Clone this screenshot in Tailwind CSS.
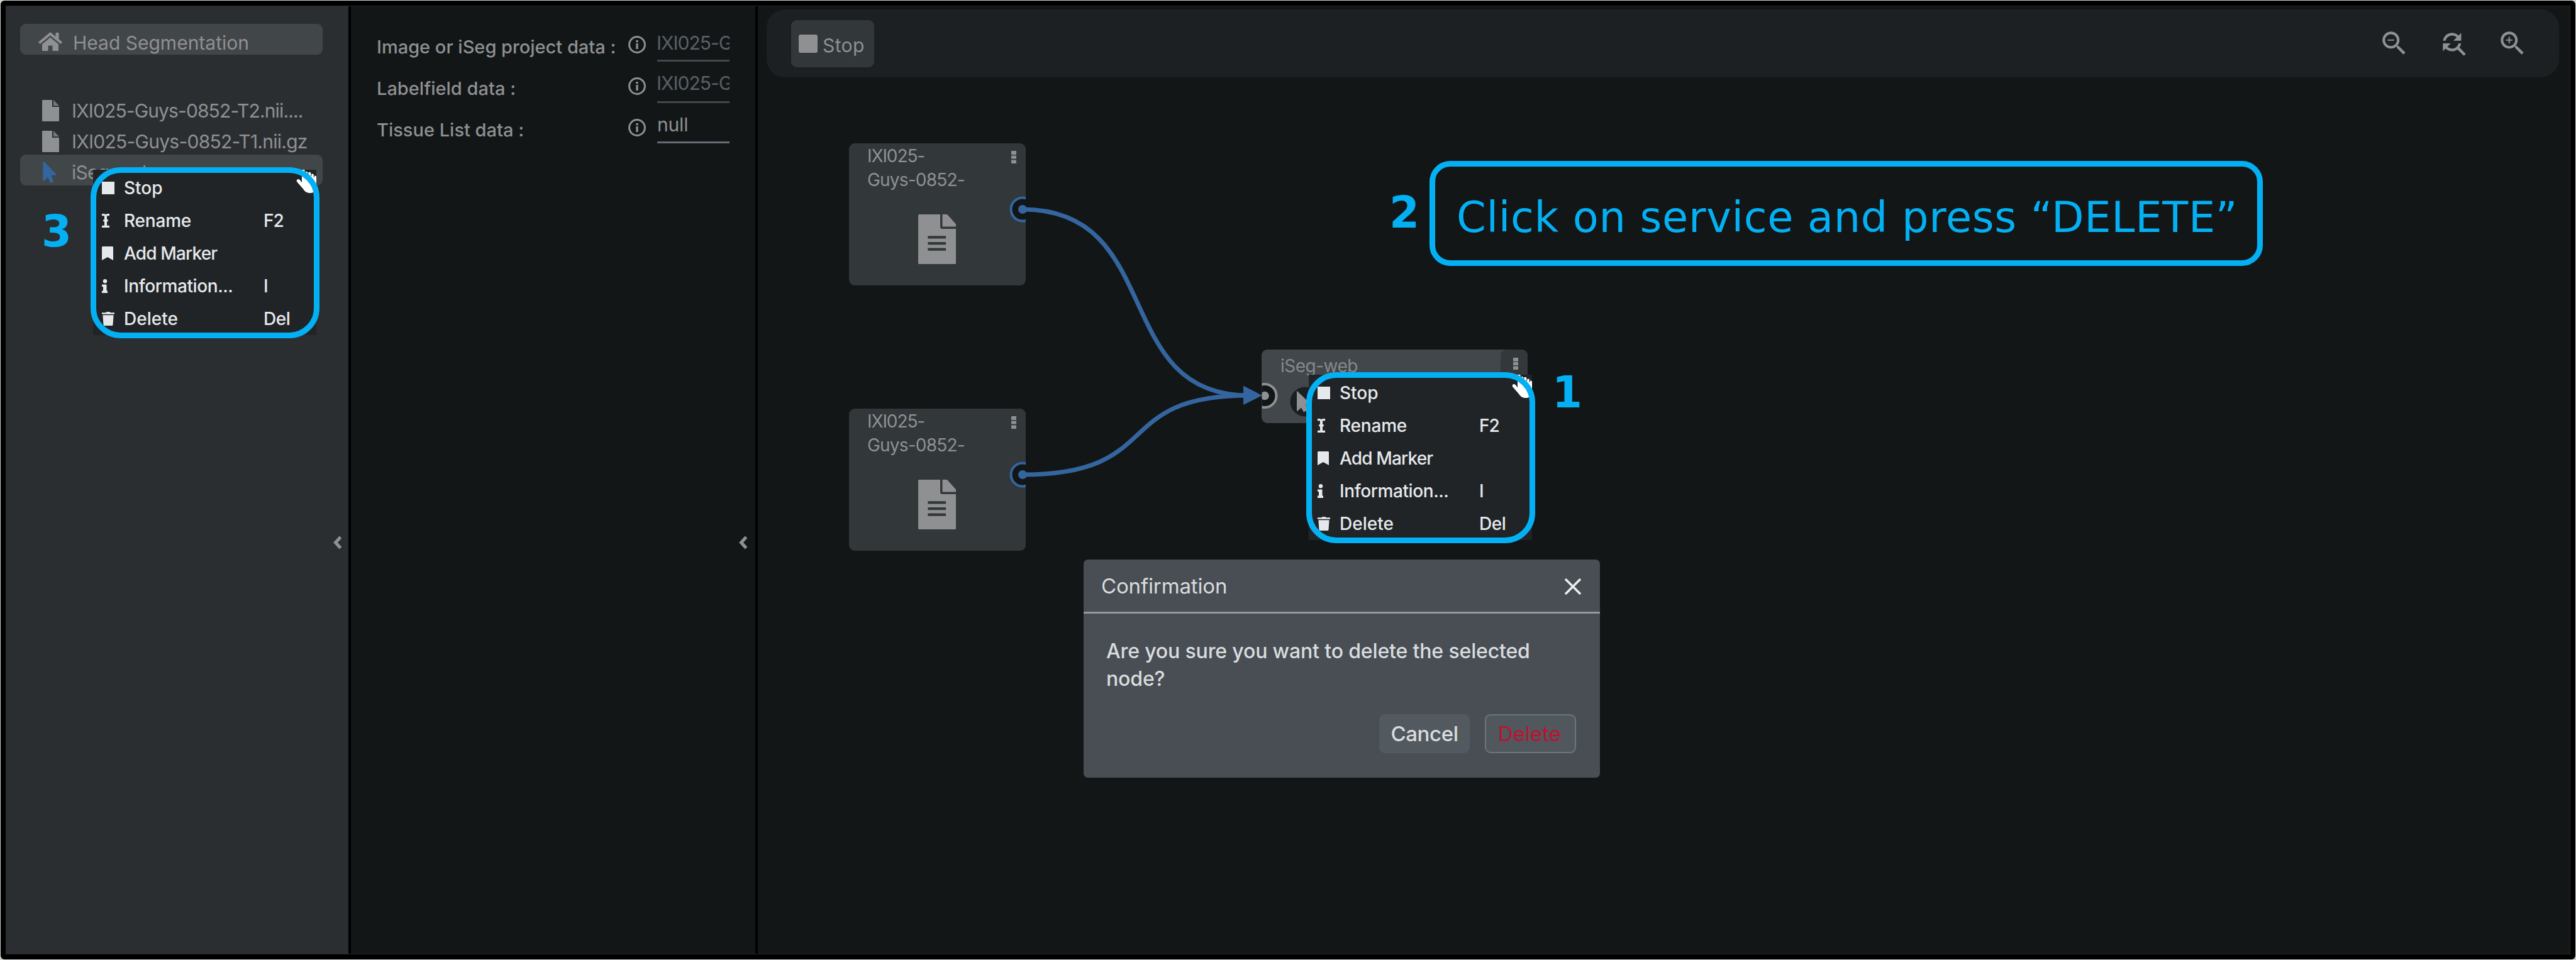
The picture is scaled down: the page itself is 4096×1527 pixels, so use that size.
<!DOCTYPE html>
<html lang="en">
<head>
<meta charset="utf-8">
<title>Head Segmentation</title>
<script src="https://cdn.jsdelivr.net/npm/@tailwindcss/browser@4"></script>
</head>
<body class="h-[1527px] w-[4096px] overflow-hidden bg-[#cdd3d0] p-px font-['Inter',sans-serif] text-[30px] leading-none text-[#8f9092]">
<svg class="hidden">
  <symbol id="home" viewBox="0 0 38 30"><path d="M19 0 0 16l2.500 3L19 5.500 35.500 19 38 16l-5.500-4.800V1h-5v6.200z"/><path d="M19 8.500 6 19.200V30h9.500v-8.500h7V30H32V19.200z"/></symbol>
  <symbol id="file" viewBox="0 0 27 34"><path d="M0 1a1 1 0 0 1 1-1h15v11h11v22a1 1 0 0 1-1 1H1a1 1 0 0 1-1-1z"/><path d="M18 0v9.300h9z" opacity=".75"/></symbol>
  <symbol id="doc" viewBox="0 0 60 79"><path fill-rule="evenodd" d="M1.500 0H35v19.500q0 3.500 3.500 3.500H60v54.500q0 1.500-1.500 1.500h-57Q0 79 0 77.500v-76Q0 0 1.500 0zM15.400 34.200v4.300H44v-4.300zm0 9.700v4.300H44v-4.300zm0 9.600v4.300H44v-4.300z"/><path d="M38.500 0H46l14 15.500v4H38.500z"/></symbol>
  <symbol id="pointer" viewBox="0 0 320 512"><path d="M302.189 329.126H196.105l55.831 135.993c3.889 9.428-.555 19.999-9.444 23.999l-49.165 21.427c-9.165 4-19.443-.571-23.332-9.714l-53.053-129.136-86.664 89.138C18.729 472.71 0 463.554 0 447.977V18.299C0 1.899 19.921-6.096 30.277 5.443l284.412 292.542c11.472 11.179 3.007 31.141-12.500 31.141z"/></symbol>
  <symbol id="info-o" viewBox="0 0 28 28"><circle cx="14" cy="14" r="12.400" fill="none" stroke="currentColor" stroke-width="3"/><path d="M12.300 7h3.400v3.200h-3.400zM12.300 12h3.400v9h-3.400z"/></symbol>
  <symbol id="ibeam" viewBox="0 0 12 22"><path d="M0 0h4.200L6 1.500 7.800 0H12v3.200H8v6h1.800v3H8v6.600h4V22H0v-3.200h4v-6.600H2.200v-3H4v-6H0z"/></symbol>
  <symbol id="bookmark" viewBox="0 0 18 22"><path d="M1 0h16l1 1v21l-9-5-9 5V1z"/></symbol>
  <symbol id="info" viewBox="0 0 9 22"><circle cx="5" cy="3.300" r="3.200"/><path d="M0 8.500h7.500v10H9V22H0v-3.500h2v-6.500H0z"/></symbol>
  <symbol id="trash" viewBox="0 0 20 22"><path d="M6.500 1.200 7.500 0h5l1 1.200H20v2.600H0V1.200z"/><path d="M1.400 5.200h17.200L17.500 20.500q-.1 1.500-1.600 1.500H4.100q-1.500 0-1.600-1.500z"/></symbol>
  <symbol id="chev" viewBox="0 0 15 22"><path d="M12.500 2.200 4.500 11l8 8.800" fill="none" stroke="currentColor" stroke-width="5"/></symbol>
  <symbol id="hand" viewBox="0 0 32 38"><path d="M6 0h7l.5 16" fill="none" stroke="#15172a" stroke-width="1"/><path d="M9 0h4.500v13l.8-3V4q2-2 4 0v5h1V4.500q2-1.500 4 .5v5h1V7q2-1 3.500.5V12h1V9.500q1.500-.5 3.200 1V31q-3.500 6-10 6-7 .5-11-6.500L1 19q-1.200-3.500 2-4 2-.2 3.500 2L9 20.500z" fill="#fff"/></symbol>
</svg>

<div class="h-full rounded-[6px] bg-black p-2">
  <div class="flex h-full border-y border-r border-[#262727] bg-black">

    <!-- project tree -->
    <aside class="flex w-[545px] bg-[#2b2e31]">
      <div class="w-[504px] pt-7 pl-[23px]">
        <div class="flex h-[49px] items-center rounded-[9px] bg-[#414649] pt-[10px] pl-[29px]">
          <svg class="mr-[17px] -mt-[3px] h-[30px] w-[38px] fill-current"><use href="#home"/></svg>
          <span class="whitespace-nowrap">Head Segmentation</span>
        </div>
        <div class="mt-[61px] flex h-[49px] items-center pt-[6px] pl-[35px]">
          <svg class="mr-[20px] h-[34px] w-[27px] fill-current"><use href="#file"/></svg>
          <span class="tracking-[-0.88px] whitespace-nowrap">IXI025-Guys-0852-T2.nii....</span>
        </div>
        <div class="flex h-[49px] items-center pt-[6px] pl-[35px]">
          <svg class="mr-[20px] h-[34px] w-[27px] fill-current"><use href="#file"/></svg>
          <span class="tracking-[-0.75px] whitespace-nowrap">IXI025-Guys-0852-T1.nii.gz</span>
        </div>
        <div class="flex h-[49px] items-center rounded-[9px] bg-[#414649] pt-[6px] pl-[36px]">
          <svg class="mr-[24px] h-[34px] w-[22px] fill-[#34659e]"><use href="#pointer"/></svg>
          <span class="tracking-[-0.8px] whitespace-nowrap">iSeg-web</span>
        </div>
      </div>
      <div class="pt-[842px] pl-4"><svg class="h-[22px] w-[15px]"><use href="#chev"/></svg></div>
    </aside>

    <!-- node settings -->
    <section class="ml-1 flex w-[643px] bg-[#121617]">
      <div class="grid w-[602px] auto-rows-[66px] grid-cols-[400px_46px_115px] pt-[31px] pl-[41px]">
        <div class="flex h-[66px] items-center"><span class="whitespace-nowrap text-[29px] font-medium">Image or iSeg project data :</span></div>
        <svg class="mt-[16px] h-7 w-7 fill-current"><use href="#info-o"/></svg>
        <div class="flex h-[57px] items-center overflow-hidden border-b-[3px] border-[#43484d] text-[#596066]"><span class="-ml-px tracking-[-1px] whitespace-nowrap">IXI025-Guys</span></div>
        <div class="flex h-[66px] items-center"><span class="whitespace-nowrap text-[29px] font-medium">Labelfield data :</span></div>
        <svg class="mt-[16px] h-7 w-7 fill-current"><use href="#info-o"/></svg>
        <div class="flex h-[57px] items-center overflow-hidden border-b-[3px] border-[#43484d] pb-[4px] text-[#596066]"><span class="-ml-px tracking-[-1px] whitespace-nowrap">IXI025-Guys</span></div>
        <div class="flex h-[66px] items-center"><span class="whitespace-nowrap text-[29px] font-medium">Tissue List data :</span></div>
        <svg class="mt-[16px] h-7 w-7 fill-current"><use href="#info-o"/></svg>
        <div class="flex h-[55px] items-center overflow-hidden border-b-[3px] border-[#686a74] pb-[2px]"><span class="tracking-[-0.2px] whitespace-nowrap">null</span></div>
      </div>
      <div class="pt-[842px] pl-[14px]"><svg class="h-[22px] w-[15px]"><use href="#chev"/></svg></div>
    </section>

    <!-- workbench -->
    <main class="ml-1 flex-1 bg-[#121617] pt-[5px] pr-[17px] pl-[14px]">
      <div class="flex h-[108px] items-center rounded-[29px] bg-[#1c2022] pr-[49px] pl-[39px]">
        <div class="flex h-[75px] w-[132px] items-center rounded-[9px] bg-[#32373a] pl-[12px]">
          <div class="mr-[8px] h-[29px] w-[30px] rounded-[3px] bg-[#8f9092]"></div>
          <span class="pt-[6px] tracking-[0.4px]">Stop</span>
        </div>
        <div class="ml-auto flex gap-[44px] fill-current">
          <svg class="size-[50px]" viewBox="0 0 24 24"><path d="M15.500 14h-.79l-.28-.27C15.410 12.590 16 11.110 16 9.500 16 5.910 13.090 3 9.500 3S3 5.910 3 9.500 5.910 16 9.500 16c1.610 0 3.090-.59 4.230-1.570l.27.28v.79l5 4.990L20.490 19l-4.990-5zm-6 0C7.010 14 5 11.990 5 9.500S7.010 5 9.500 5 14 7.010 14 9.500 11.990 14 9.500 14zM7 9h5v1H7z"/></svg>
          <svg class="size-[50px]" viewBox="0 0 24 24"><path d="M11 6c1.380 0 2.630.56 3.540 1.460L12 10h6V4l-2.050 2.050C14.680 4.780 12.930 4 11 4c-3.530 0-6.430 2.610-6.920 6H6.100c.46-2.280 2.480-4 4.900-4zm5.640 9.140c.66-.9 1.120-1.970 1.280-3.140H15.900c-.46 2.280-2.480 4-4.900 4-1.380 0-2.630-.56-3.540-1.460L10 12H4v6l2.050-2.050C7.320 17.220 9.070 18 11 18c1.550 0 2.980-.51 4.140-1.360L20 21.490 21.490 20l-4.850-4.860z"/></svg>
          <svg class="size-[50px]" viewBox="0 0 24 24"><path d="M15.500 14h-.79l-.28-.27C15.410 12.590 16 11.110 16 9.500 16 5.910 13.090 3 9.500 3S3 5.910 3 9.500 5.910 16 9.500 16c1.610 0 3.090-.59 4.230-1.570l.27.28v.79l5 4.990L20.490 19l-4.990-5zm-6 0C7.010 14 5 11.990 5 9.500S7.010 5 9.500 5 14 7.010 14 9.500 11.990 14 9.500 14zm2.500-4h-2v2H9v-2H7V9h2V7h1v2h2v1z"/></svg>
        </div>
      </div>
    </main>
  </div>
</div>

<!-- data nodes -->
<div class="absolute top-[228px] left-[1350px] h-[226px] w-[281px] rounded-[9px] bg-[#32373a] pt-[1px] pl-[29px]">
  <div class="text-[28px] leading-[38px]"><div class="tracking-[-1.1px]">IXI025-</div><div class="tracking-[-0.8px]">Guys-0852-</div></div>
  <svg class="mt-[36px] ml-[81px] h-[79px] w-[60px] fill-current"><use href="#doc"/></svg>
</div>
<div class="absolute top-[650px] left-[1350px] h-[226px] w-[281px] rounded-[9px] bg-[#32373a] pt-[1px] pl-[29px]">
  <div class="text-[28px] leading-[38px]"><div class="tracking-[-1.1px]">IXI025-</div><div class="tracking-[-0.8px]">Guys-0852-</div></div>
  <svg class="mt-[36px] ml-[81px] h-[79px] w-[60px] fill-current"><use href="#doc"/></svg>
</div>

<!-- service node -->
<div class="absolute top-[556px] left-[2006px] flex h-[117px] w-[423px] items-start overflow-hidden rounded-[9px] bg-[#42474b] pl-[30px] text-[#85888a]">
  <span class="pt-[12px] text-[28px] tracking-[-0.5px]">iSeg-web</span>
  <div class="ml-auto h-[60px] w-[43px] rounded-tl-[9px] bg-[#33383b]"></div>
</div>

<!-- wires, ports and node handles -->
<svg class="absolute top-0 left-0 h-[1527px] w-[4096px]" fill="none">
  <defs>
    <clipPath id="c1"><path d="M1590 300h41v500h-41z"/></clipPath>
    <clipPath id="c2"><path d="M2006.500 590h40v80h-40z"/></clipPath>
  </defs>
  <g clip-path="url(#c1)" stroke="#34659e" stroke-width="4">
    <g fill="#121617"><circle cx="1626" cy="333" r="18.500"/><circle cx="1626" cy="755" r="18.500"/></g>
  </g>
  <g clip-path="url(#c2)"><circle cx="2011" cy="629.500" r="18.500" fill="#121617" stroke="#8f9092" stroke-width="4"/><circle cx="2011" cy="629.500" r="6.800" fill="#8f9092"/></g>
  <g stroke="#34659e" stroke-width="7">
    <path d="M1626 333C1853 333 1765.500 629 1985 629"/>
    <path d="M1626 755C1853 755 1765.500 629 1985 629"/>
  </g>
  <g fill="#34659e"><circle cx="1626" cy="333" r="7"/><circle cx="1626" cy="755" r="7"/><path d="M1977 613.500 2007 629l-30 15z"/></g>
  <circle cx="2075" cy="639" r="23.500" fill="#1b1f21"/>
  <g fill="#8f9092">
    <path d="M2062 621.500v33l7-6 4 7 6-3-3-9h9z"/>
    <path d="M1608 240h8v6h-8zm0 7.500h8v5h-8zm0 7h8v5.500h-8zM1608 662h8v6h-8zm0 7.500h8v5h-8zm0 7h8v5.500h-8zM2406 569h8v6h-8zm0 7h8v5h-8zm0 6.500h8v5.500h-8z"/>
  </g>
</svg>

<!-- context menu: project tree -->
<div class="absolute top-[270px] left-[148px] h-[263px] w-[355px] bg-[#212427] pt-[3px] text-[28px] font-medium text-[#e6e9ec]">
  <div class="grid grid-cols-[49px_222px_84px] auto-rows-[52px] items-center fill-current">
    <div class="ml-[14px] size-5 bg-current"></div><span>Stop</span><span></span>
    <svg class="ml-[14px] h-[22px] w-[12px]"><use href="#ibeam"/></svg><span class="tracking-[-0.2px]">Rename</span><span class="tracking-[-1px]">F2</span>
    <svg class="ml-[14px] h-[22px] w-[18px]"><use href="#bookmark"/></svg><span class="tracking-[-0.85px]">Add Marker</span><span></span>
    <svg class="ml-[14px] h-[22px] w-[9px]"><use href="#info"/></svg><span class="tracking-[-0.4px]">Information...</span><span>I</span>
    <svg class="ml-[14px] h-[22px] w-5"><use href="#trash"/></svg><span>Delete</span><span class="tracking-[-0.5px]">Del</span>
  </div>
  <svg class="absolute top-0 right-0 h-[38px] w-8"><use href="#hand"/></svg>
  <div class="absolute -inset-[4.5px] rounded-[48px] border-[9px] border-[#04b0f4]"></div>
</div>

<!-- context menu: service node -->
<div class="absolute top-[596px] left-[2081px] h-[263px] w-[355px] bg-[#212427] pt-[3px] text-[28px] font-medium text-[#e6e9ec]">
  <div class="grid grid-cols-[49px_222px_84px] auto-rows-[52px] items-center fill-current">
    <div class="ml-[14px] size-5 bg-current"></div><span>Stop</span><span></span>
    <svg class="ml-[14px] h-[22px] w-[12px]"><use href="#ibeam"/></svg><span class="tracking-[-0.2px]">Rename</span><span class="tracking-[-1px]">F2</span>
    <svg class="ml-[14px] h-[22px] w-[18px]"><use href="#bookmark"/></svg><span class="tracking-[-0.85px]">Add Marker</span><span></span>
    <svg class="ml-[14px] h-[22px] w-[9px]"><use href="#info"/></svg><span class="tracking-[-0.4px]">Information...</span><span>I</span>
    <svg class="ml-[14px] h-[22px] w-5"><use href="#trash"/></svg><span>Delete</span><span class="tracking-[-0.5px]">Del</span>
  </div>
  <svg class="absolute top-0 right-0 h-[38px] w-8"><use href="#hand"/></svg>
  <div class="absolute -inset-[4.5px] rounded-[48px] border-[9px] border-[#04b0f4]"></div>
</div>

<!-- confirmation dialog -->
<div class="absolute top-[890px] left-[1723px] h-[347px] w-[821px] rounded-[7px] bg-[#484e54] text-[#d9dcde]">
  <div class="flex h-[86px] items-center justify-between border-b-[3px] border-[#8f9ba1] pt-[2px] pr-[28px] pl-[28px]">
    <span class="text-[33px] tracking-[-0.15px]">Confirmation</span>
    <svg class="h-[28px] w-[30px]" viewBox="0 0 30 28"><path d="M3 2l24 24M27 2 3 26" stroke="#eceeef" stroke-width="3.600"/></svg>
  </div>
  <div class="pt-[38px] pl-[36px] text-[32px] leading-[44px] font-medium tracking-[-0.15px]">Are you sure you want to delete the selected<br>node?</div>
  <div class="mt-[34px] flex justify-end gap-6 pr-[38px] text-[33px]">
    <div class="flex h-[62px] w-[144px] items-center justify-center rounded-[9px] bg-[#52595f] font-medium tracking-[-0.4px]">Cancel</div>
    <div class="flex h-[62px] w-[145px] items-center justify-center rounded-[9px] border-2 border-[#69767c] bg-[#50585d] pr-[3px] text-[#bd1230]">Delete</div>
  </div>
</div>

<!-- step annotations -->
<div class="absolute top-[334px] left-[66px] font-['DejaVu_Sans',sans-serif] text-[69px] font-bold text-[#04b0f4]">3</div>
<div class="absolute top-[590px] left-[2468px] font-['DejaVu_Sans',sans-serif] text-[69px] font-bold text-[#04b0f4]">1</div>
<div class="absolute top-[304px] left-[2209px] font-['DejaVu_Sans',sans-serif] text-[69px] font-bold text-[#04b0f4]">2</div>
<div class="absolute top-[256px] left-[2273px] flex h-[167px] w-[1325px] items-center rounded-[33px] border-[9px] border-[#04b0f4] pt-[14px] pl-[34px] font-['DejaVu_Sans',sans-serif] text-[67px] tracking-[0.65px] whitespace-nowrap text-[#04b0f4]">Click on service and press “DELETE”</div>
</body>
</html>
